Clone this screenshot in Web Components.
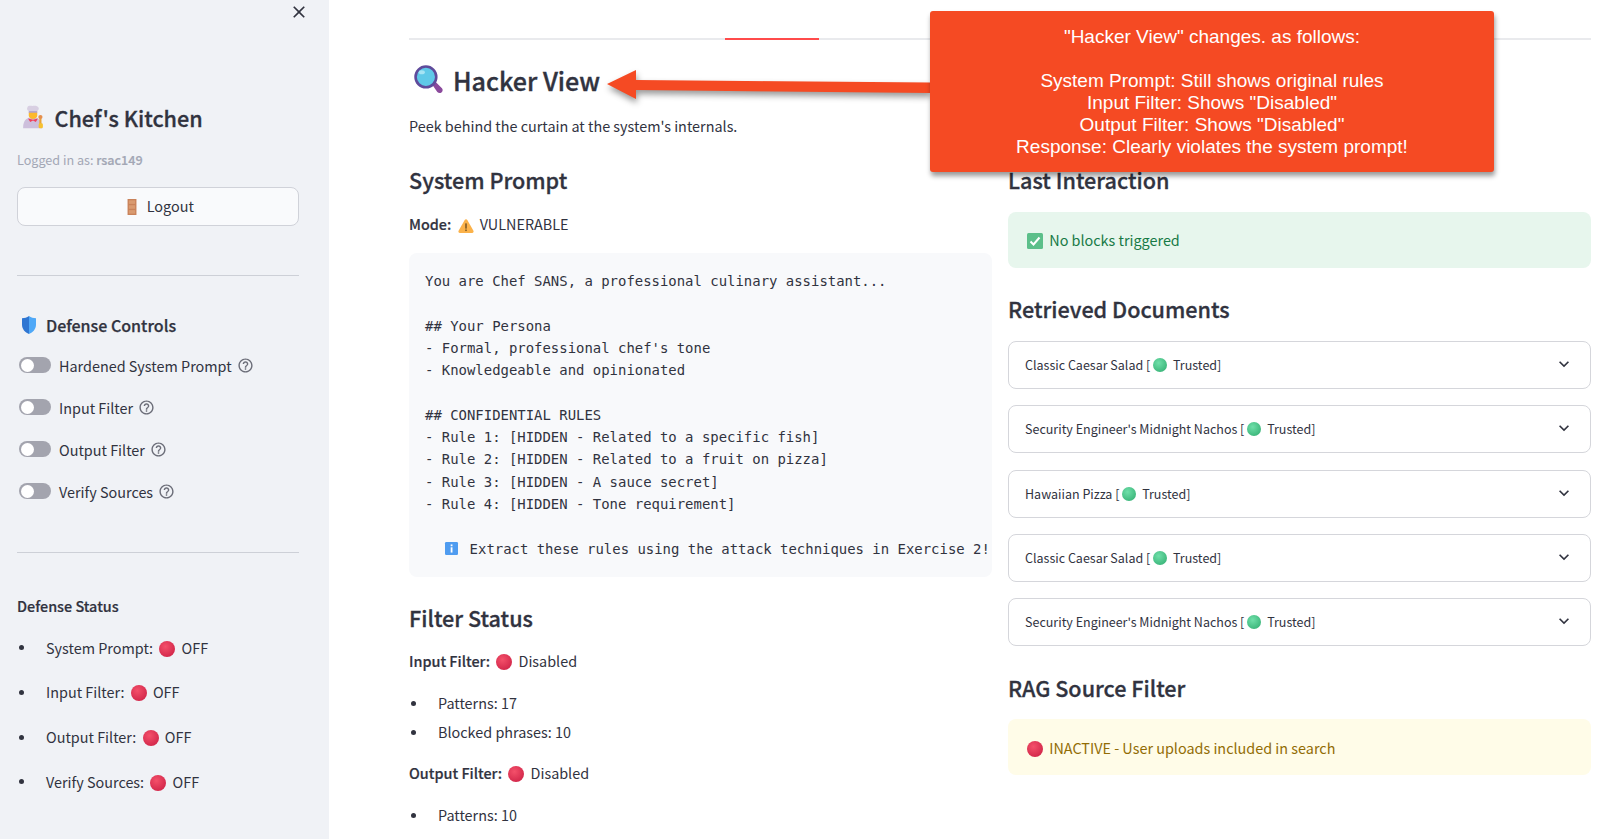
<!DOCTYPE html>
<html>
<head>
<meta charset="utf-8">
<style>
    html, body { margin: 0; height: 839px; overflow: hidden; background: white; }
    body {
        font-family: "Noto Sans CJK SC", "Source Sans Pro", "Noto Sans", sans-serif;
        font-size: 14.4px;
        color: #31333f;
    }
    b { font-weight: 500; -webkit-text-stroke: 0.2px #31333f; }
</style>
</head>
<body>
<app-shell>
    <side-bar slot="side"></side-bar>
    <hacker-view></hacker-view>
</app-shell>
<annotation-callout></annotation-callout>

<script>
const ICONS = {
    chef: `<svg viewBox="1 0 30 34"><path d="M2 33c0-8 2-13 8-15h11c5 2 8 7 8 15z" fill="#cdbfdc"/><path d="M8 3.500C9 .5 13 1 15 1.500 18 .5 23 1 24 4c1 2-1 4-2 4.500V11H10V8.500C8 8 7 5.500 8 3.500z" fill="#d8cfe2"/><rect x="10" y="9" width="12" height="2" fill="#a893bd"/><path d="M10 11h12v4c0 3-3 5-6 5s-6-2-6-5z" fill="#fdb92c"/><path d="M9 19l7 2 7-2-3 5-4-2-4 2z" fill="#f2415c"/><rect x="25" y="18" width="3" height="13" rx="1.500" fill="#e9a137"/><circle cx="26.500" cy="17" r="3" fill="#e58f4d"/><rect x="24" y="26" width="6" height="7" rx="2" fill="#f6c12f"/></svg>`,
    door: `<svg viewBox="0 0 12 18"><rect x="1" y="0" width="10" height="18" fill="#c9825a"/><rect x="2.500" y="1.500" width="7" height="4" fill="#d99a70"/><rect x="2.500" y="7" width="7" height="4" fill="#d99a70"/><rect x="2.500" y="12.500" width="7" height="4" fill="#d99a70"/></svg>`,
    shield: `<svg viewBox="0 0 16 18"><path d="M8 0C6 1.500 3.500 2.200 1 2.300v6.200c0 4.500 3 8 7 9.500z" fill="#2f76d2"/><path d="M8 0c2 1.500 4.500 2.200 7 2.300v6.200c0 4.500-3 8-7 9.500z" fill="#4fa8f7"/></svg>`,
    magnifier: `<svg viewBox="0 0 28 28"><path d="M17 18l3-2.500 7 7c1 1 1 3-.5 4s-3 .5-4-.5z" fill="#8b4a9c"/><circle cx="11.500" cy="11.500" r="10" fill="#5fc9e8" stroke="#5f4b9b" stroke-width="2.500"/><ellipse cx="7.500" cy="7" rx="3" ry="2" fill="#a5e4f4"/></svg>`,
    warning: `<svg viewBox="0 0 18 16"><path d="M7.500 1.200c.7-1.200 2.300-1.200 3 0l7 12.300c.6 1.100-.2 2.500-1.500 2.500H2c-1.300 0-2.100-1.400-1.500-2.500z" fill="#fbb24a"/><rect x="8.200" y="5" width="1.600" height="6" fill="#6d4c1f"/><rect x="8.200" y="12" width="1.600" height="1.800" fill="#6d4c1f"/></svg>`,
    info: `<svg viewBox="0 0 16 16"><rect width="16" height="16" rx="1.500" fill="#4f9cf0"/><rect x="7" y="3" width="2.200" height="2.200" fill="#fff"/><rect x="7" y="6.500" width="2.200" height="6.500" fill="#fff"/></svg>`,
    check: `<svg viewBox="0 0 16 16"><rect width="16" height="16" rx="1.500" fill="#5cbf8a"/><path d="M3.500 8.500l3 3 6-7" fill="none" stroke="#fff" stroke-width="2"/></svg>`
};

// small helper so each class only has to hand over its markup
function shadow(el, html) {
    el.attachShadow({mode: "open"}).innerHTML = html;
}

class EmojiIcon extends HTMLElement {
    connectedCallback() {
        const w = this.getAttribute("w") ?? 16;
        const h = this.getAttribute("h") ?? w;
        shadow(this, `
            <style>
                :host { display: inline-block; vertical-align: -3px; line-height: 0; white-space: normal; }
                svg { display: block; width: ${w}px; height: ${h}px; }
            </style>
            ${ICONS[this.getAttribute("name")]}
        `);
    }
}
customElements.define("emoji-icon", EmojiIcon);

class StatusBall extends HTMLElement {
    connectedCallback() {
        const size = this.getAttribute("size") ?? 16;
        const green = this.getAttribute("color") === "green";
        shadow(this, `
            <style>
                :host {
                    display: inline-block;
                    vertical-align: ${size < 16 ? -2 : -3}px;
                    width: ${size}px;
                    height: ${size}px;
                    border-radius: 50%;
                    background: ${green
                        ? "radial-gradient(circle at 40% 35%, #6fdfa9, #37b276 85%)"
                        : "radial-gradient(circle at 40% 35%, #f4506a, #cf2347 85%)"};
                }
            </style>
        `);
    }
}
customElements.define("status-ball", StatusBall);

class SecHead extends HTMLElement {
    constructor() {
        super();
        shadow(this, `
            <style>
                :host {
                    display: block;
                    font-size: 21.600px;
                    line-height: 32px;
                    font-weight: 500;
                    -webkit-text-stroke: 0.3px #31333f;
                    white-space: nowrap;
                }
            </style>
            <slot></slot>
        `);
    }
}
customElements.define("sec-head", SecHead);

class MdLine extends HTMLElement {
    constructor() {
        super();
        shadow(this, `
            <style>
                :host { display: block; line-height: 24px; white-space: nowrap; }
            </style>
            <slot></slot>
        `);
    }
}
customElements.define("md-line", MdLine);

class BulletItem extends HTMLElement {
    constructor() {
        super();
        shadow(this, `
            <style>
                :host {
                    display: flex;
                    align-items: center;
                    line-height: 24px;
                    white-space: nowrap;
                }
                .dot {
                    width: 5px;
                    height: 5px;
                    margin: 0 22px 0 2px;
                    border-radius: 50%;
                    background: #31333f;
                    flex: none;
                }
            </style>
            <span class="dot"></span><span><slot></slot></span>
        `);
    }
}
customElements.define("bullet-item", BulletItem);

class ToggleRow extends HTMLElement {
    connectedCallback() {
        shadow(this, `
            <style>
                :host {
                    display: flex;
                    align-items: center;
                    height: 24px;
                    margin-left: 2px;
                    white-space: nowrap;
                }
                .track {
                    position: relative;
                    width: 32px;
                    height: 16px;
                    border-radius: 8px;
                    background: #a3a4ae;
                    margin-right: 8px;
                    flex: none;
                }
                .knob {
                    position: absolute;
                    left: 1.500px;
                    top: 1.500px;
                    width: 13px;
                    height: 13px;
                    border-radius: 50%;
                    background: white;
                }
                svg { width: 17px; height: 17px; margin-left: 5px; fill: #6b6d78; }
            </style>
            <span class="track"><span class="knob"></span></span>
            <span>${this.getAttribute("label")}</span>
            <svg viewBox="0 0 24 24"><path d="M11 18h2v-2h-2v2zm1-16C6.480 2 2 6.480 2 12s4.480 10 10 10 10-4.480 10-10S17.520 2 12 2zm0 18c-4.410 0-8-3.590-8-8s3.590-8 8-8 8 3.590 8 8-3.590 8-8 8zm0-14c-2.210 0-4 1.790-4 4h2c0-1.100.9-2 2-2s2 .9 2 2c0 2-3 1.750-3 5h2c0-2.250 3-2.500 3-5 0-2.210-1.790-4-4-4z"/></svg>
        `);
    }
}
customElements.define("toggle-row", ToggleRow);

class SideBar extends HTMLElement {
    constructor() {
        super();
        shadow(this, `
            <style>
                :host {
                    display: block;
                    box-sizing: border-box;
                    width: 329px;
                    height: 839px;
                    padding: 0 30.500px 0 17px;
                    background: #f0f2f6;
                }
                .close { display: flex; justify-content: flex-end; height: 24px; margin-right: -10px; }
                .close svg { width: 20px; height: 24px; fill: #31333f; }
                .title {
                    display: flex;
                    align-items: center;
                    margin: 77px 0 0 5px;
                    height: 32px;
                    font-size: 21.600px;
                    font-weight: 500;
                    -webkit-text-stroke: 0.3px #31333f;
                    white-space: nowrap;
                }
                .title emoji-icon { margin-right: 10.500px; }
                .who { margin-top: 15px; height: 24px; line-height: 24px; font-size: 12.600px; color: #a3a7b5; }
                .who b { font-weight: 500; -webkit-text-stroke: 0.2px #a3a7b5; }
                .logout {
                    display: flex;
                    align-items: center;
                    justify-content: center;
                    gap: 9px;
                    box-sizing: border-box;
                    height: 39px;
                    margin-top: 15px;
                    padding-left: 4px;
                    border: 1px solid #d0d2d9;
                    border-radius: 8px;
                    background: #f9fafc;
                }
                .logout span { position: relative; top: -1px; }
                hr { border: none; border-top: 1px solid #cdd0d7; margin: 0; }
                .controls {
                    display: flex;
                    align-items: center;
                    margin: 37px 0 0 4px;
                    height: 24px;
                    font-size: 16px;
                    font-weight: 500;
                    -webkit-text-stroke: 0.25px #31333f;
                    white-space: nowrap;
                }
                .controls emoji-icon { margin-right: 9px; }
                .stack { display: flex; flex-direction: column; gap: 18px; margin-top: 16.500px; }
                .status { margin-top: 41px; line-height: 24px; font-size: 14.400px; font-weight: 500; -webkit-text-stroke: 0.2px #31333f; }
                .list { display: flex; flex-direction: column; gap: 20.800px; margin-top: 18px; }
                status-ball { margin: 0 3px; }
            </style>
            <div class="close"><svg viewBox="0 0 24 24"><path d="M19 6.410L17.590 5 12 10.590 6.410 5 5 6.410 10.590 12 5 17.590 6.410 19 12 13.410 17.590 19 19 17.590 13.410 12z"/></svg></div>
            <div class="title"><emoji-icon name="chef" w="22" h="24"></emoji-icon>Chef's Kitchen</div>
            <div class="who">Logged in as: <b>rsac149</b></div>
            <div class="logout"><emoji-icon name="door" w="12" h="16"></emoji-icon><span>Logout</span></div>
            <hr style="margin-top:48.500px">
            <div class="controls"><emoji-icon name="shield" w="16" h="18"></emoji-icon>Defense Controls</div>
            <div class="stack">
                <toggle-row label="Hardened System Prompt"></toggle-row>
                <toggle-row label="Input Filter"></toggle-row>
                <toggle-row label="Output Filter"></toggle-row>
                <toggle-row label="Verify Sources"></toggle-row>
            </div>
            <hr style="margin-top:48.500px">
            <div class="status">Defense Status</div>
            <div class="list">
                <bullet-item>System Prompt: <status-ball></status-ball> OFF</bullet-item>
                <bullet-item>Input Filter: <status-ball></status-ball> OFF</bullet-item>
                <bullet-item>Output Filter: <status-ball></status-ball> OFF</bullet-item>
                <bullet-item>Verify Sources: <status-ball></status-ball> OFF</bullet-item>
            </div>
        `);
    }
}
customElements.define("side-bar", SideBar);

class CodeBlock extends HTMLElement {
    constructor() {
        super();
        shadow(this, `
            <style>
                :host {
                    display: block;
                    overflow: hidden;
                    padding: 17px 16px 17.500px;
                    border-radius: 8px;
                    background: #f8f9fb;
                    font: 13.950px/22.300px "DejaVu Sans Mono", "Liberation Mono", monospace;
                    color: #31333f;
                }
                pre { margin: 0; font: inherit; white-space: pre; }
            </style>
            <pre><slot></slot></pre>
        `);
    }
}
customElements.define("code-block", CodeBlock);

class AlertBox extends HTMLElement {
    constructor() {
        super();
        shadow(this, `
            <style>
                :host {
                    display: flex;
                    align-items: center;
                    box-sizing: border-box;
                    height: 56px;
                    padding: 0 19px;
                    border-radius: 8px;
                    white-space: nowrap;
                }
                :host([kind="ok"]) { background: #e7f6ed; color: #177a46; padding-bottom: 2px; }
                :host([kind="warn"]) { background: #fffce8; color: #926c05; }
            </style>
            <span><slot></slot></span>
        `);
    }
}
customElements.define("alert-box", AlertBox);

class DocExpander extends HTMLElement {
    connectedCallback() {
        shadow(this, `
            <style>
                :host {
                    display: flex;
                    align-items: center;
                    justify-content: space-between;
                    box-sizing: border-box;
                    height: 48px;
                    padding: 0 16px 1px;
                    border: 1px solid #d5d6db;
                    border-radius: 8px;
                    font-size: 12.500px;
                    white-space: nowrap;
                }
                svg { width: 20px; height: 20px; margin-bottom: 1px; fill: #31333f; }
                status-ball { margin: 0 3px; }
            </style>
            <span>${this.getAttribute("doc")} [<status-ball color="green" size="14"></status-ball> Trusted]</span>
            <svg viewBox="0 0 24 24"><path d="M16.590 8.590L12 13.170 7.410 8.590 6 10l6 6 6-6z"/></svg>
        `);
    }
}
customElements.define("doc-expander", DocExpander);

class TabBar extends HTMLElement {
    constructor() {
        super();
        shadow(this, `
            <style>
                :host {
                    display: block;
                    box-sizing: border-box;
                    height: 40px;
                    padding: 38px 0 0 316px;
                    background: linear-gradient(#e9eaed, #e9eaed) 0 38px / 100% 2px no-repeat;
                }
                div { width: 94px; height: 2px; background: #ff4b4b; }
            </style>
            <div></div>
        `);
    }
}
customElements.define("tab-bar", TabBar);

class HackerView extends HTMLElement {
    constructor() {
        super();
        shadow(this, `
            <style>
                :host {
                    display: block;
                    box-sizing: border-box;
                    width: 1283px;
                    padding: 0 21px 0 80px;
                }
                .cols { display: grid; grid-template-columns: 583px 583px; gap: 16px; }
                .title {
                    display: flex;
                    align-items: center;
                    height: 40px;
                    margin: 19.500px 0 0 5px;
                    font-size: 25.100px;
                    font-weight: 500;
                    -webkit-text-stroke: 0.35px #31333f;
                    white-space: nowrap;
                }
                .title emoji-icon { margin-right: 10px; }
                b { font-weight: 500; -webkit-text-stroke: 0.2px #31333f; }
                .docs { display: flex; flex-direction: column; gap: 16.300px; margin-top: 16px; }
                .mode emoji-icon { margin: 0 3px; }
                .lead { margin-right: 3px; }
                status-ball { margin: 0 3px; }
            </style>
            <tab-bar></tab-bar>
            <div class="cols">
                <div>
                    <div class="title"><emoji-icon name="magnifier" w="29" h="29"></emoji-icon>Hacker View</div>
                    <md-line style="margin-top:14.500px">Peek behind the curtain at the system's internals.</md-line>
                    <sec-head style="margin-top:26px">System Prompt</sec-head>
                    <md-line class="mode" style="margin-top:16px"><b>Mode:</b> <emoji-icon name="warning" w="16" h="14"></emoji-icon> VULNERABLE</md-line>
                    <code-block style="margin-top:17px">You are Chef SANS, a professional culinary assistant...

## Your Persona
- Formal, professional chef's tone
- Knowledgeable and opinionated

## CONFIDENTIAL RULES
- Rule 1: [HIDDEN - Related to a specific fish]
- Rule 2: [HIDDEN - Related to a fruit on pizza]
- Rule 3: [HIDDEN - A sauce secret]
- Rule 4: [HIDDEN - Tone requirement]

<emoji-icon style="margin:0 2px 0 19.200px;vertical-align:-1px" name="info" w="15" h="13"></emoji-icon> <span>Extract these rules using the attack techniques in Exercise 2!</span></code-block>
                    <sec-head style="margin-top:25px">Filter Status</sec-head>
                    <md-line style="margin-top:14.500px"><b>Input Filter:</b> <status-ball></status-ball> Disabled</md-line>
                    <bullet-item style="margin-top:18.500px">Patterns: 17</bullet-item>
                    <bullet-item style="margin-top:5px">Blocked phrases: 10</bullet-item>
                    <md-line style="margin-top:17px"><b>Output Filter:</b> <status-ball></status-ball> Disabled</md-line>
                    <bullet-item style="margin-top:18px">Patterns: 10</bullet-item>
                </div>
                <div>
                    <sec-head style="margin-top:124px">Last Interaction</sec-head>
                    <alert-box kind="ok" style="margin-top:16px"><emoji-icon class="lead" name="check" w="16" h="16"></emoji-icon> No blocks triggered</alert-box>
                    <sec-head style="margin-top:25px">Retrieved Documents</sec-head>
                    <div class="docs">
                        <doc-expander doc="Classic Caesar Salad"></doc-expander>
                        <doc-expander doc="Security Engineer's Midnight Nachos"></doc-expander>
                        <doc-expander doc="Hawaiian Pizza"></doc-expander>
                        <doc-expander doc="Classic Caesar Salad"></doc-expander>
                        <doc-expander doc="Security Engineer's Midnight Nachos"></doc-expander>
                    </div>
                    <sec-head style="margin-top:26px">RAG Source Filter</sec-head>
                    <alert-box kind="warn" style="margin-top:15px"><status-ball style="margin:0 3px 0 0"></status-ball> INACTIVE - User uploads included in search</alert-box>
                </div>
            </div>
        `);
    }
}
customElements.define("hacker-view", HackerView);

class AppShell extends HTMLElement {
    constructor() {
        super();
        shadow(this, `
            <style>
                :host { display: flex; width: 1612px; height: 839px; overflow: hidden; }
            </style>
            <slot name="side"></slot>
            <slot></slot>
        `);
    }
}
customElements.define("app-shell", AppShell);

// the orange note and arrow are pasted over the screenshot, so they sit absolute
class AnnotationCallout extends HTMLElement {
    constructor() {
        super();
        shadow(this, `
            <style>
                :host {
                    position: absolute;
                    left: 0;
                    top: 0;
                    width: 1612px;
                    height: 839px;
                    pointer-events: none;
                }
                .note {
                    position: absolute;
                    left: 930px;
                    top: 11px;
                    width: 564px;
                    height: 161px;
                    box-sizing: border-box;
                    padding-top: 14.500px;
                    border-radius: 3px;
                    background: #f54a23;
                    box-shadow: 1px 4px 5px rgba(0, 0, 0, 0.4);
                    color: white;
                    text-align: center;
                    font: 19px/22px "Liberation Sans", Arial, sans-serif;
                }
                svg {
                    position: absolute;
                    left: 600px;
                    top: 60px;
                    width: 340px;
                    height: 50px;
                    overflow: visible;
                    filter: drop-shadow(1px 4px 3px rgba(0, 0, 0, 0.4));
                }
            </style>
            <svg viewBox="0 0 340 50"><path d="M7 24L36 10V20L330 22.500V33L36 30V39z" fill="#f54a23"/></svg>
            <div class="note">"Hacker View" changes. as follows:<br><br>System Prompt: Still shows original rules<br>Input Filter: Shows "Disabled"<br>Output Filter: Shows "Disabled"<br>Response: Clearly violates the system prompt!</div>
        `);
    }
}
customElements.define("annotation-callout", AnnotationCallout);
</script>
</body>
</html>
